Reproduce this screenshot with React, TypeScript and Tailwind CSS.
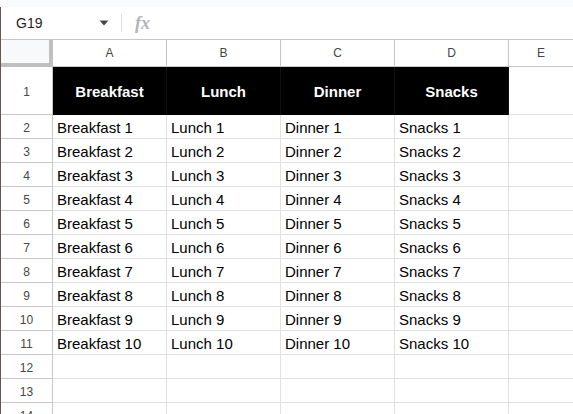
import React from "react";

const columns = ["A", "B", "C", "D"];
const headings = ["Breakfast", "Lunch", "Dinner", "Snacks"];
const dataRows = Array.from({ length: 10 }, (_, i) => i + 1);

const font = { fontFamily: '"Liberation Sans", Arial, sans-serif' };

function RowHeader({ n, tall }: { n: number; tall?: boolean }) {
  return (
    <div
      className={`flex w-[52px] shrink-0 items-center justify-center border-r border-b border-[#c4c7c5] pt-[2px] text-[12px] text-[#444746] ${
        tall ? "h-[48px]" : "h-[24px]"
      }`}
    >
      {n}
    </div>
  );
}

export default function App() {
  return (
    <div className="h-[414px] w-[573px] overflow-hidden bg-white" style={font}>
      <div className="h-[7px] bg-[#f9fbfd]" />

      <div className="h-[407px] overflow-hidden border-l border-[#6b5550]">
        {/* formula bar */}
        <div className="flex h-[33px] items-center border-b border-[#c4c7c5]">
          <div className="w-[84px] pl-[15px] text-[14px] text-[#1f1f1f]">G19</div>
          <svg width="10" height="6" viewBox="0 0 10 6" className="ml-[14px]">
            <path d="M0.5 0.5h9L5 5.5z" fill="#444746" />
          </svg>
          <div className="ml-[12px] h-[18px] w-px bg-[#dadce0]" />
          <div
            className="ml-[13px] text-[18px] font-bold italic text-[#b0b4b8]"
            style={{ fontFamily: '"Liberation Serif", serif' }}
          >
            fx
          </div>
        </div>

        {/* column headers */}
        <div className="flex h-[27px]">
          <div className="h-[27px] w-[52px] shrink-0 border-r-4 border-b-4 border-[#c0c0c0] bg-[#f8f9fa]" />
          {columns.map((c) => (
            <div
              key={c}
              className="flex h-[27px] w-[114px] shrink-0 items-center justify-center border-r border-b border-[#c4c7c5] text-[12px] text-[#444746]"
            >
              {c}
            </div>
          ))}
          <div className="flex h-[27px] flex-1 items-center justify-center border-b border-[#c4c7c5] text-[12px] text-[#444746]">
            E
          </div>
        </div>

        {/* row 1 */}
        <div className="flex">
          <RowHeader n={1} tall />
          {headings.map((h) => (
            <div
              key={h}
              className="flex h-[48px] w-[114px] shrink-0 items-center justify-center border-r border-[#111111] bg-black pt-[2px] text-[15px] font-bold text-white"
            >
              {h}
            </div>
          ))}
          <div className="h-[48px] flex-1 border-b border-[#e1e1e1]" />
        </div>

        {dataRows.map((n) => (
          <div key={n} className="flex">
            <RowHeader n={n + 1} />
            {headings.map((h) => (
              <div
                key={h}
                className="h-[24px] w-[114px] shrink-0 border-r border-b border-[#e1e1e1] pl-[4px] pt-[4px] text-[15px] leading-[17px] text-black"
              >
                {h} {n}
              </div>
            ))}
            <div className="h-[24px] flex-1 border-b border-[#e1e1e1]" />
          </div>
        ))}

        {[12, 13, 14].map((n) => (
          <div key={n} className="flex">
            <RowHeader n={n} />
            {headings.map((h) => (
              <div
                key={h}
                className="h-[24px] w-[114px] shrink-0 border-r border-b border-[#e1e1e1]"
              />
            ))}
            <div className="h-[24px] flex-1 border-b border-[#e1e1e1]" />
          </div>
        ))}
      </div>
    </div>
  );
}
